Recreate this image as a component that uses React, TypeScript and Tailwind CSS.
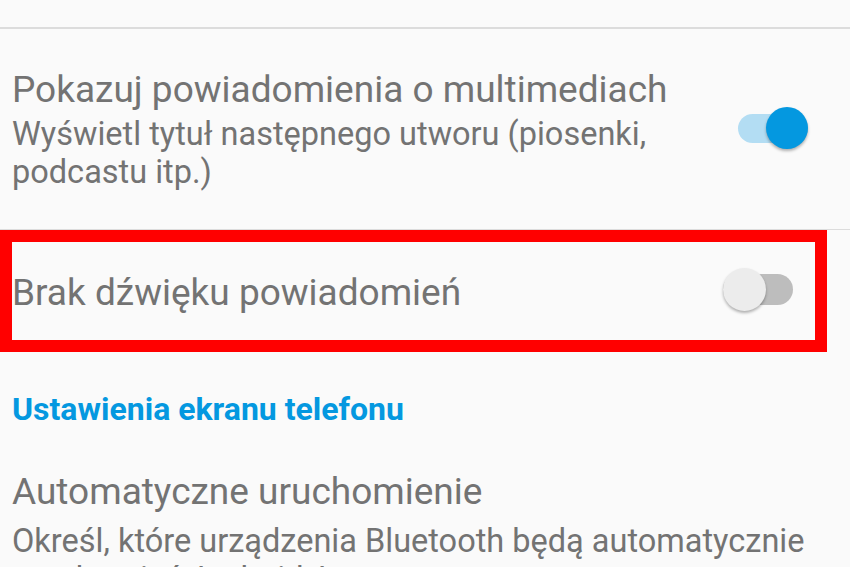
import React from "react";

function Toggle({ on }: { on: boolean }) {
  if (on) {
    return (
      <div className="relative w-[70px] h-[42px] flex items-center">
        <div className="w-[70px] h-[29px] rounded-full bg-[#b3ddf3]" />
        <div className="absolute right-0 top-0 w-[42px] h-[42px] rounded-full bg-[#0498e0] shadow-[0_2px_3px_rgba(0,0,0,0.3)]" />
      </div>
    );
  }
  return (
    <div className="relative w-[70px] h-[43px] flex items-center">
      <div className="w-[70px] h-[31px] rounded-full bg-[#bdbdbd]" />
      <div className="absolute left-0 top-0 w-[43px] h-[43px] rounded-full bg-[#ececec] shadow-[0_2px_3px_rgba(0,0,0,0.3)]" />
    </div>
  );
}

export default function App() {
  return (
    <div
      className="w-[850px] h-[567px] overflow-hidden bg-[#fafafa] flex flex-col text-[#737373]"
      style={{ fontFamily: "Roboto, 'Noto Sans', sans-serif" }}
    >
      <div className="h-[27px] shrink-0" />
      <div className="h-[2px] shrink-0 bg-[#dcdcdc]" />
      <div className="h-[200px] shrink-0 flex items-start justify-between pl-[12px] pr-[42px] pt-[39px]">
        <div className="flex flex-col">
          <div className="text-[37px] leading-[44px] whitespace-nowrap">Pokazuj powiadomienia o multimediach</div>
          <div className="text-[32.5px] leading-[38px] w-[700px] mt-[3px]">
            Wyświetl tytuł następnego utworu (piosenki, podcastu itp.)
          </div>
        </div>
        <div className="mt-[39px]">
          <Toggle on />
        </div>
      </div>
      <div className="h-[1px] shrink-0 bg-[#dcdcdc]" />
      <div className="relative h-[122px] shrink-0 flex items-center justify-between pl-[12px] pr-[57px]">
        <div className="text-[37px] leading-[44px] mt-[3px]">Brak dźwięku powiadomień</div>
        <div className="mb-[3px]">
          <Toggle on={false} />
        </div>
        <div className="absolute left-0 top-0 w-[827px] h-[122px] border-[12px] border-[#ff0000]" />
      </div>
      <div className="h-[77px] shrink-0 pl-[12px] pt-[37px]">
        <div className="text-[32px] leading-[40px] font-bold text-[#0498e0]">Ustawienia ekranu telefonu</div>
      </div>
      <div className="flex flex-col pl-[12px] pt-[41px]">
        <div className="text-[37px] leading-[44px]">Automatyczne uruchomienie</div>
        <div className="text-[32.5px] leading-[38px] w-[830px] mt-[8px]">
          Określ, które urządzenia Bluetooth będą automatycznie uruchamiać Android Auto
        </div>
      </div>
    </div>
  );
}
